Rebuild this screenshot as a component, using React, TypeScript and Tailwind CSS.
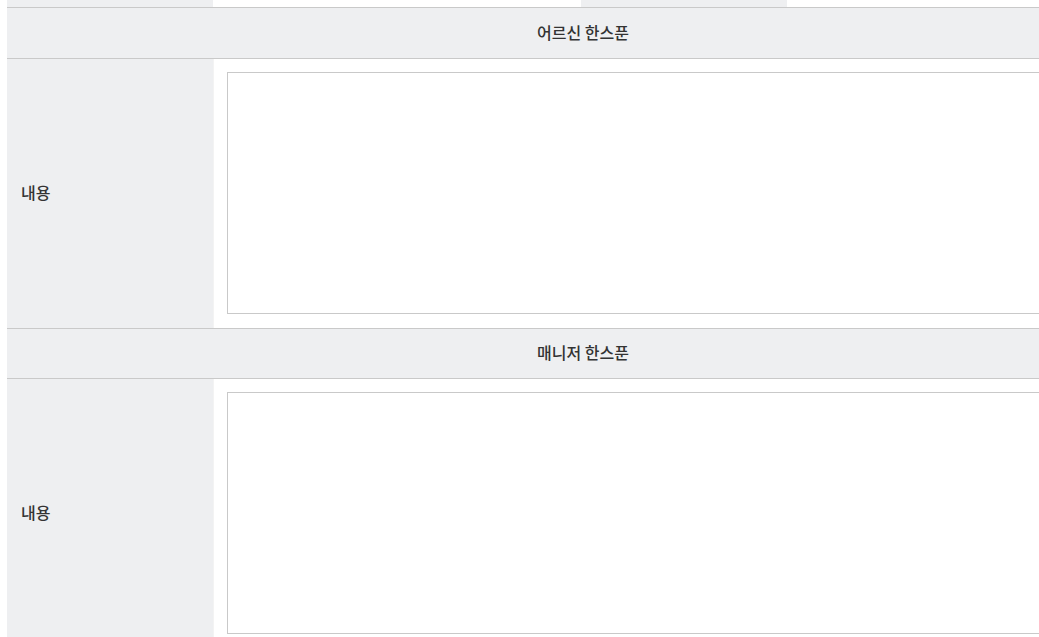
export default function App() {
  const sections = [
    { title: '어르신 한스푼', headerH: 'h-[51px]' },
    { title: '매니저 한스푼', headerH: 'h-[50px]' },
  ];

  return (
    <div
      className="w-[1039px] h-[637px] overflow-hidden bg-white pl-[7px]"
      style={{ fontFamily: '"Noto Sans CJK KR", "Noto Sans", sans-serif' }}
    >
      <div className="w-[1152px] text-[16px] text-[#333]">
        {/* Top sliver of previous row */}
        <div className="flex h-[8px] border-b border-[#c9c9c9]">
          <div className="w-[206px] bg-[#eeeff1]" />
          <div className="w-[368px] bg-white" />
          <div className="w-[206px] bg-[#eeeff1]" />
          <div className="flex-1 bg-white" />
        </div>

        {sections.map(({ title, headerH }) => (
          <div key={title}>
            <div
              className={`${headerH} flex items-center justify-center bg-[#eeeff1] border-b border-[#c9c9c9] pb-[3px] font-medium`}
            >
              {title}
            </div>
            <div className="flex border-b border-[#c9c9c9]">
              <div className="w-[206px] shrink-0 bg-[#eeeff1] flex items-center px-[14px] pb-[3px] font-medium">
                내용
              </div>
              <div className="flex-1 pl-[13px] pr-[14px] pt-[13px] pb-[14px] border-l border-[#f3f3f3]">
                <textarea className="block w-full h-[242px] border border-[#c9c9c9] resize-none outline-none bg-white" />
              </div>
            </div>
          </div>
        ))}
      </div>
    </div>
  );
}
